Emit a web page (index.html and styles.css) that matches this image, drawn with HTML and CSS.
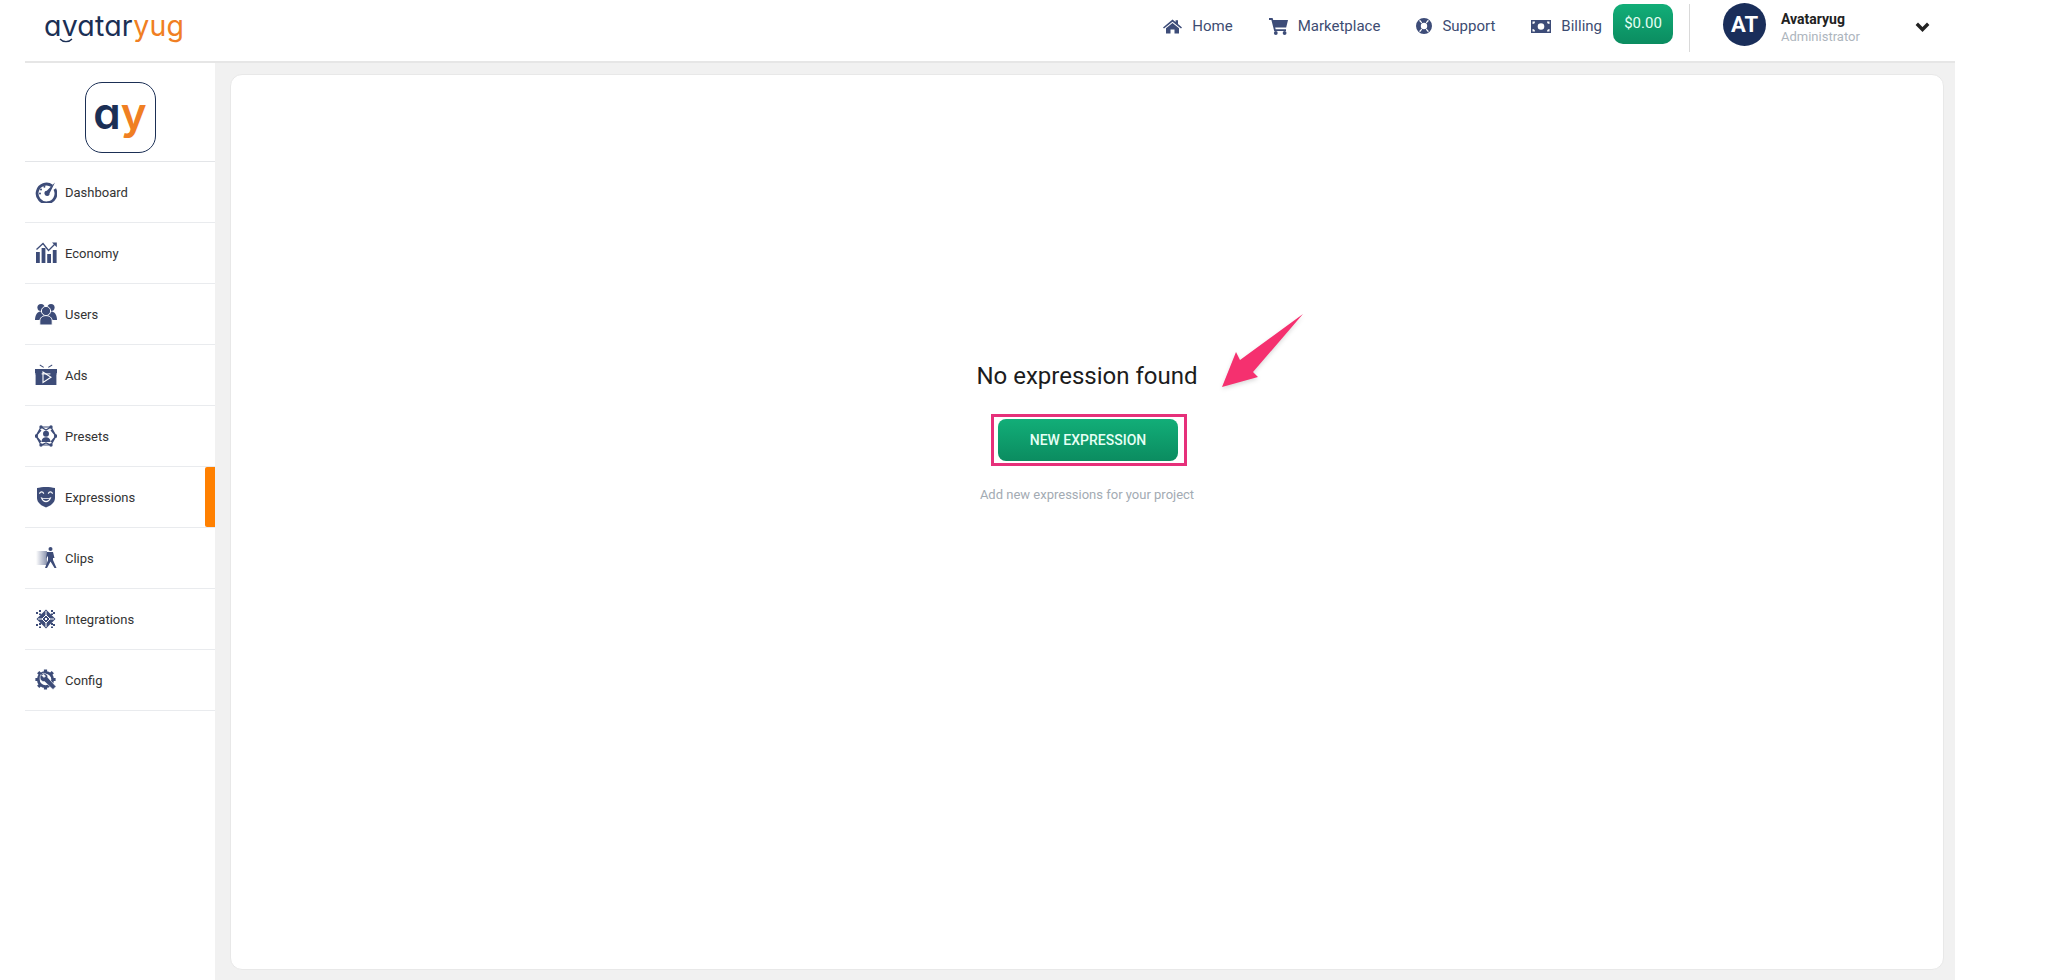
FILE: index.html
```html
<!DOCTYPE html>
<html lang="en">
<head>
  <title>Avataryug - Expressions</title>
  <link rel="stylesheet" href="styles.css">
</head>
<body>
  <div class="app">
    <header class="topbar">
      <a class="brand"><span class="brand-dark">avatar</span><span class="brand-orange">yug</span><svg class="brand-smile" width="14" height="5" viewBox="0 0 14 5"><path d="M1 1 C4 4.5 10 4.5 13 1" fill="none" stroke="#1b2f55" stroke-width="1.3"/></svg></a>
      <nav class="topnav">
        <a class="topnav-item">
          <svg class="topnav-icon" width="19" height="15" viewBox="0 0 19 15"><path d="M9.5 0.5 L12.6 3.1 V1.2 H15 V5.1 L19 8.4 L18 9.6 L9.5 2.7 L1 9.6 L0 8.4 Z M9.5 4 L16 9.3 V14.6 H11.5 V10.4 H7.5 V14.6 H3 V9.3 Z"/></svg>
          Home
        </a>
        <a class="topnav-item">
          <svg class="topnav-icon" width="19" height="17" viewBox="0 0 19 17"><path d="M0 0 H3.6 L4.2 2 H19 L17.2 9.6 H6.2 L6.6 11.2 H17 V13 H5.2 L2.4 1.9 H0 Z"/><circle cx="6.8" cy="15" r="1.9"/><circle cx="15.6" cy="15" r="1.9"/></svg>
          Marketplace
        </a>
        <a class="topnav-item">
          <svg class="topnav-icon" width="16" height="16" viewBox="0 0 16 16"><path fill-rule="evenodd" d="M8 0 A8 8 0 1 1 8 16 A8 8 0 1 1 8 0 Z M8 4.8 A3.2 3.2 0 1 0 8 11.2 A3.2 3.2 0 1 0 8 4.8 Z M3 2.8 L5.4 5.2 L6.2 4.4 L4.2 1.9 Z M13 2.8 L10.6 5.2 L9.8 4.4 L11.8 1.9 Z M3 13.2 L5.4 10.8 L6.2 11.6 L4.2 14.1 Z M13 13.2 L10.6 10.8 L9.8 11.6 L11.8 14.1 Z"/></svg>
          Support
        </a>
        <a class="topnav-item">
          <svg class="topnav-icon" width="20" height="13" viewBox="0 0 20 13"><path fill-rule="evenodd" d="M0 0 H20 V13 H0 Z M10 3.2 A3.3 3.3 0 1 0 10 9.8 A3.3 3.3 0 1 0 10 3.2 Z M1.5 1.5 V4 A2.5 2.5 0 0 0 4 1.5 Z M18.5 1.5 H16 A2.5 2.5 0 0 0 18.5 4 Z M1.5 11.5 H4 A2.5 2.5 0 0 0 1.5 9 Z M18.5 11.5 V9 A2.5 2.5 0 0 0 16 11.5 Z"/></svg>
          Billing
        </a>
      </nav>
      <div class="balance">$0.00</div>
      <div class="divider"></div>
      <div class="avatar">AT</div>
      <div class="user">
        <div class="user-name">Avataryug</div>
        <div class="user-role">Administrator</div>
      </div>
      <svg class="chevron" width="15" height="10" viewBox="0 0 15 10"><path d="M1.8 1.8 L7.5 7.5 L13.2 1.8" fill="none" stroke="#222" stroke-width="3.4"/></svg>
    </header>

    <div class="body-row">
      <aside class="sidebar">
        <div class="side-logo">
          <div class="side-logo-box"><span class="brand-dark">a</span><span class="brand-orange">y</span></div>
        </div>

        <a class="side-item">
          <svg class="side-icon" viewBox="0 0 22 22"><path fill="none" stroke="#3d4c78" stroke-width="2.8" d="M17 4.8 A9.4 9.4 0 1 0 19.8 8"/><path d="M20 1.5 L11.8 9.8 A2.6 2.6 0 1 0 14.6 12.2 Z"/><circle cx="6" cy="8.4" r="1"/><circle cx="5" cy="12.4" r="1"/><circle cx="9.4" cy="5.8" r="1"/></svg>
          Dashboard
        </a>
        <a class="side-item">
          <svg class="side-icon" viewBox="0 0 22 22"><rect x="1" y="10" width="3.8" height="11"/><rect x="6.6" y="6" width="3.8" height="15"/><rect x="12.2" y="12" width="3.8" height="9"/><rect x="17.8" y="8" width="3.8" height="13"/><path fill="none" stroke="#3d4c78" stroke-width="1.3" d="M1.5 7.5 L8 1.5 L13.5 8.5 L20 2"/><path d="M17 0.5 H21.8 V5.3 Z"/></svg>
          Economy
        </a>
        <a class="side-item">
          <svg class="side-icon" viewBox="0 0 22 22"><circle cx="6" cy="4.5" r="3.6"/><circle cx="16" cy="4.5" r="3.6"/><path d="M0 17 C0 11 3 8.5 6 8.5 H16 C19 8.5 22 11 22 17 Z"/><circle cx="11" cy="8" r="4.6" stroke="#fff" stroke-width="1"/><path d="M4.8 22 V18 C4.8 14.6 7.8 12.6 11 12.6 C14.2 12.6 17.2 14.6 17.2 18 V22 Z" stroke="#fff" stroke-width="1"/></svg>
          Users
        </a>
        <a class="side-item">
          <svg class="side-icon" viewBox="0 0 22 22"><path d="M5 0.5 L9 3 L8.4 3.8 L4.6 1.6 Z M17 0.5 L13 3 L13.6 3.8 L17.4 1.6 Z"/><rect x="0" y="5" width="22" height="4.4"/><rect x="0.6" y="10.4" width="20.8" height="10.6"/><rect x="0.6" y="9" width="6" height="2"/><rect x="15.4" y="9" width="6" height="2"/><path d="M8 8 V18.5 L16 13.2 Z" fill="none" stroke="#fff" stroke-width="1.1"/></svg>
          Ads
        </a>
        <a class="side-item">
          <svg class="side-icon" viewBox="0 0 22 22"><path fill="none" stroke="#3d4c78" stroke-width="1.2" d="M6 2 H16 L21 11 L16 20 H6 L1 11 Z M6 2 L11 5 L16 2 M1 11 L6 5 M21 11 L16 5 M1 11 L6 17 M21 11 L16 17 M6 20 L11 18 L16 20"/><circle cx="6" cy="2" r="1.7"/><circle cx="16" cy="2" r="1.7"/><circle cx="20.6" cy="11" r="1.7"/><circle cx="16" cy="20" r="1.7"/><circle cx="6" cy="20" r="1.7"/><circle cx="1.4" cy="11" r="1.7"/><circle cx="11" cy="8.8" r="3"/><path d="M6.5 17 C6.5 13.5 9 12.2 11 12.2 C13 12.2 15.5 13.5 15.5 17 Z"/></svg>
          Presets
        </a>
        <a class="side-item side-item-active">
          <svg class="side-icon" viewBox="0 0 22 22"><path d="M2 2 C7 0.5 15 0.5 20 2 V12 C20 17 15 20 11 21.5 C7 20 2 17 2 12 Z"/><path fill="none" stroke="#fff" stroke-width="1.2" d="M4.4 7.6 C5.6 5.4 7.6 5.4 8.8 7.6 M13.2 7.6 C14.4 5.4 16.4 5.4 17.6 7.6"/><path d="M5.6 11 C8 12.8 14 12.8 16.4 11 C15.6 14.6 13 16.2 11 16.2 C9 16.2 6.4 14.6 5.6 11 Z" fill="#fff"/><path d="M7.5 12.4 C9.5 13.2 12.5 13.2 14.5 12.4 C13.6 14.2 12.2 14.8 11 14.8 C9.8 14.8 8.4 14.2 7.5 12.4 Z"/></svg>
          Expressions
        </a>
        <a class="side-item">
          <svg class="side-icon" viewBox="0 0 22 22"><defs><linearGradient id="fade"><stop offset="0" stop-color="#3d4c78" stop-opacity="0"/><stop offset="1" stop-color="#3d4c78" stop-opacity="0.6"/></linearGradient></defs><rect x="1" y="4" width="11" height="14" fill="url(#fade)"/><circle cx="15.5" cy="2" r="2"/><path d="M12 5 H18 L19.5 11 H18 V13 L21.5 21 H19.5 L15.5 14.5 L12 21 H10 L13 13 V9 L11 11.5 Z"/></svg>
          Clips
        </a>
        <a class="side-item">
          <svg class="side-icon" viewBox="0 0 22 22"><path d="M11 1.5 L20.5 11 L11 20.5 L1.5 11 Z"/><path fill="none" stroke="#fff" stroke-width="1" d="M11 7 L15 11 L11 15 L7 11 Z M11 3 V7 M11 15 V19 M3 11 H7 M15 11 H19"/><rect x="10" y="10" width="2" height="2" fill="#fff"/><path fill="none" stroke="#3d4c78" stroke-width="2" stroke-dasharray="2 1.6" d="M5 2 L5 7 M17 2 L17 7 M5 15 L5 20 M17 15 L17 20 M1 5 H4 M18 5 H21 M1 17 H4 M18 17 H21"/></svg>
          Integrations
        </a>
        <a class="side-item">
          <svg class="side-icon" viewBox="0 0 22 22"><circle cx="10.5" cy="10.5" r="7.2" fill="none" stroke="#3d4c78" stroke-width="2.8"/><path fill="none" stroke="#3d4c78" stroke-width="3.2" d="M10.5 0.4 V3 M10.5 18 V20.6 M0.4 10.5 H3 M18 10.5 H20.6 M3.2 3.2 L5.2 5.2 M15.8 15.8 L17.8 17.8 M17.8 3.2 L15.8 5.2 M3.2 17.8 L5.2 15.8"/><path d="M6 5.5 L9 8.5 L10.5 7 L7.5 4.5 C10 3.8 13 5.5 12.8 8.5 L21 17.5 L18 20.5 L9.5 12.5 C6.5 13 4.5 10 5.2 7.5 Z" stroke="#fff" stroke-width="0.6"/></svg>
          Config
        </a>
      </aside>

      <main class="content">
        <section class="card">
          <div class="empty-title">No expression found</div>
          <div class="highlight">
            <button class="new-btn">NEW EXPRESSION</button>
          </div>
          <div class="empty-hint">Add new expressions for your project</div>
          <svg class="arrow" width="90" height="82" viewBox="0 0 90 82"><path d="M81 0 L18 46 L14 38 L0 73 L36 63 L31 58 Z" fill="#f5306f"/></svg>
        </section>
      </main>
    </div>
  </div>
</body>
</html>
```
FILE: styles.css
```css
* {
  box-sizing: border-box;
}

html, body {
  margin: 0;
  height: 100%;
  background: #ffffff;
  font-family: Roboto, "Liberation Sans", sans-serif;
  overflow: hidden;
}

.app {
  width: 1930px;
  height: 980px;
  margin-left: 25px;
  display: flex;
  flex-direction: column;
}

/* top bar */
.topbar {
  height: 63px;
  flex: none;
  display: flex;
  align-items: flex-start;
  padding-right: 25px;
  background: #ffffff;
  border-bottom: 2px solid #e6e6e6;
}

.brand {
  position: relative;
  margin: 7px 0 0 19px;
  font-family: Inter, sans-serif;
  font-feature-settings: "cv11";
  font-size: 28.5px;
  line-height: 38px;
  letter-spacing: 0.2px;
}

.brand-smile {
  position: absolute;
  left: 15px;
  top: 31px;
}

.brand-dark {
  color: #1b2f55;
}

.brand-orange {
  color: #f07f23;
}

.topnav {
  margin-left: auto;
  display: flex;
  gap: 36px;
  height: 52px;
  align-items: center;
}

.topnav-item {
  display: flex;
  align-items: center;
  gap: 10px;
  font-size: 15px;
  color: #3d4c72;
}

.topnav-icon {
  fill: #3d4c78;
  flex: none;
}

.balance {
  margin: 4px 0 0 11px;
  width: 60px;
  height: 40px;
  line-height: 38px;
  text-align: center;
  font-size: 15px;
  color: #e6fff5;
  border-radius: 10px;
  background: linear-gradient(#12ae78, #0b8c60);
}

.divider {
  margin: 4px 0 0 16px;
  width: 1px;
  height: 48px;
  background: #d9d9d9;
}

.avatar {
  margin: 3px 0 0 33px;
  width: 43px;
  height: 43px;
  line-height: 43px;
  border-radius: 50%;
  background: #1a2e5a;
  color: #ffffff;
  text-align: center;
  font-size: 22px;
  font-weight: 700;
}

.user {
  margin: 11px 0 0 15px;
  width: 134px;
}

.user-name {
  font-size: 14px;
  line-height: 17px;
  font-weight: 700;
  color: #222222;
}

.user-role {
  font-size: 13px;
  line-height: 17px;
  color: #adb5bd;
}

.chevron {
  margin-top: 22px;
}

/* sidebar */
.body-row {
  flex: 1;
  display: flex;
  min-height: 0;
}

.sidebar {
  width: 190px;
  flex: none;
  background: #ffffff;
}

.side-logo {
  height: 99px;
  border-bottom: 1px solid #e3e5e8;
  display: flex;
  justify-content: center;
  padding-top: 19px;
}

.side-logo-box {
  width: 71px;
  height: 71px;
  border: 1.5px solid #1b2f55;
  border-radius: 17px;
  text-align: center;
  font-family: Inter, sans-serif;
  font-feature-settings: "cv11";
  font-size: 44px;
  font-weight: 600;
  line-height: 60px;
}

.side-item {
  position: relative;
  height: 61px;
  display: flex;
  align-items: center;
  gap: 8px;
  padding-left: 10px;
  border-bottom: 1px solid #e9ebee;
  font-size: 13px;
  color: #333333;
}

.side-icon {
  width: 22px;
  height: 22px;
  fill: #3d4c78;
  flex: none;
}

.side-item-active::after {
  content: "";
  position: absolute;
  top: 0;
  right: 0;
  width: 10px;
  height: 60px;
  background: #ff8000;
  border-radius: 2px 0 0 2px;
}

/* main */
.content {
  flex: 1;
  background: #f1f1f1;
  padding: 11px 11px 10px 15px;
}

.card {
  position: relative;
  height: 100%;
  background: #ffffff;
  border: 1px solid #e8e8e8;
  border-radius: 12px;
  display: flex;
  flex-direction: column;
  align-items: center;
  padding-top: 286px;
}

.empty-title {
  font-size: 24px;
  line-height: 30px;
  color: #1c1c1c;
}

.highlight {
  margin: 23px 0 0 4px;
  width: 196px;
  height: 52px;
  border: 3px solid #e6307a;
  display: flex;
  align-items: center;
  justify-content: center;
}

.new-btn {
  width: 180px;
  height: 42px;
  margin-left: -2px;
  border: none;
  border-radius: 8px;
  background: linear-gradient(#12ae78, #0b8c60);
  color: #e6fff5;
  font-family: Roboto, sans-serif;
  font-size: 14px;
  font-weight: 500;
}

.empty-hint {
  margin-top: 21px;
  font-size: 13px;
  line-height: 16px;
  color: #a3abb3;
}

.arrow {
  position: absolute;
  left: 991px;
  top: 239px;
  filter: drop-shadow(0 2px 2px rgba(0,0,0,0.15));
}
```
